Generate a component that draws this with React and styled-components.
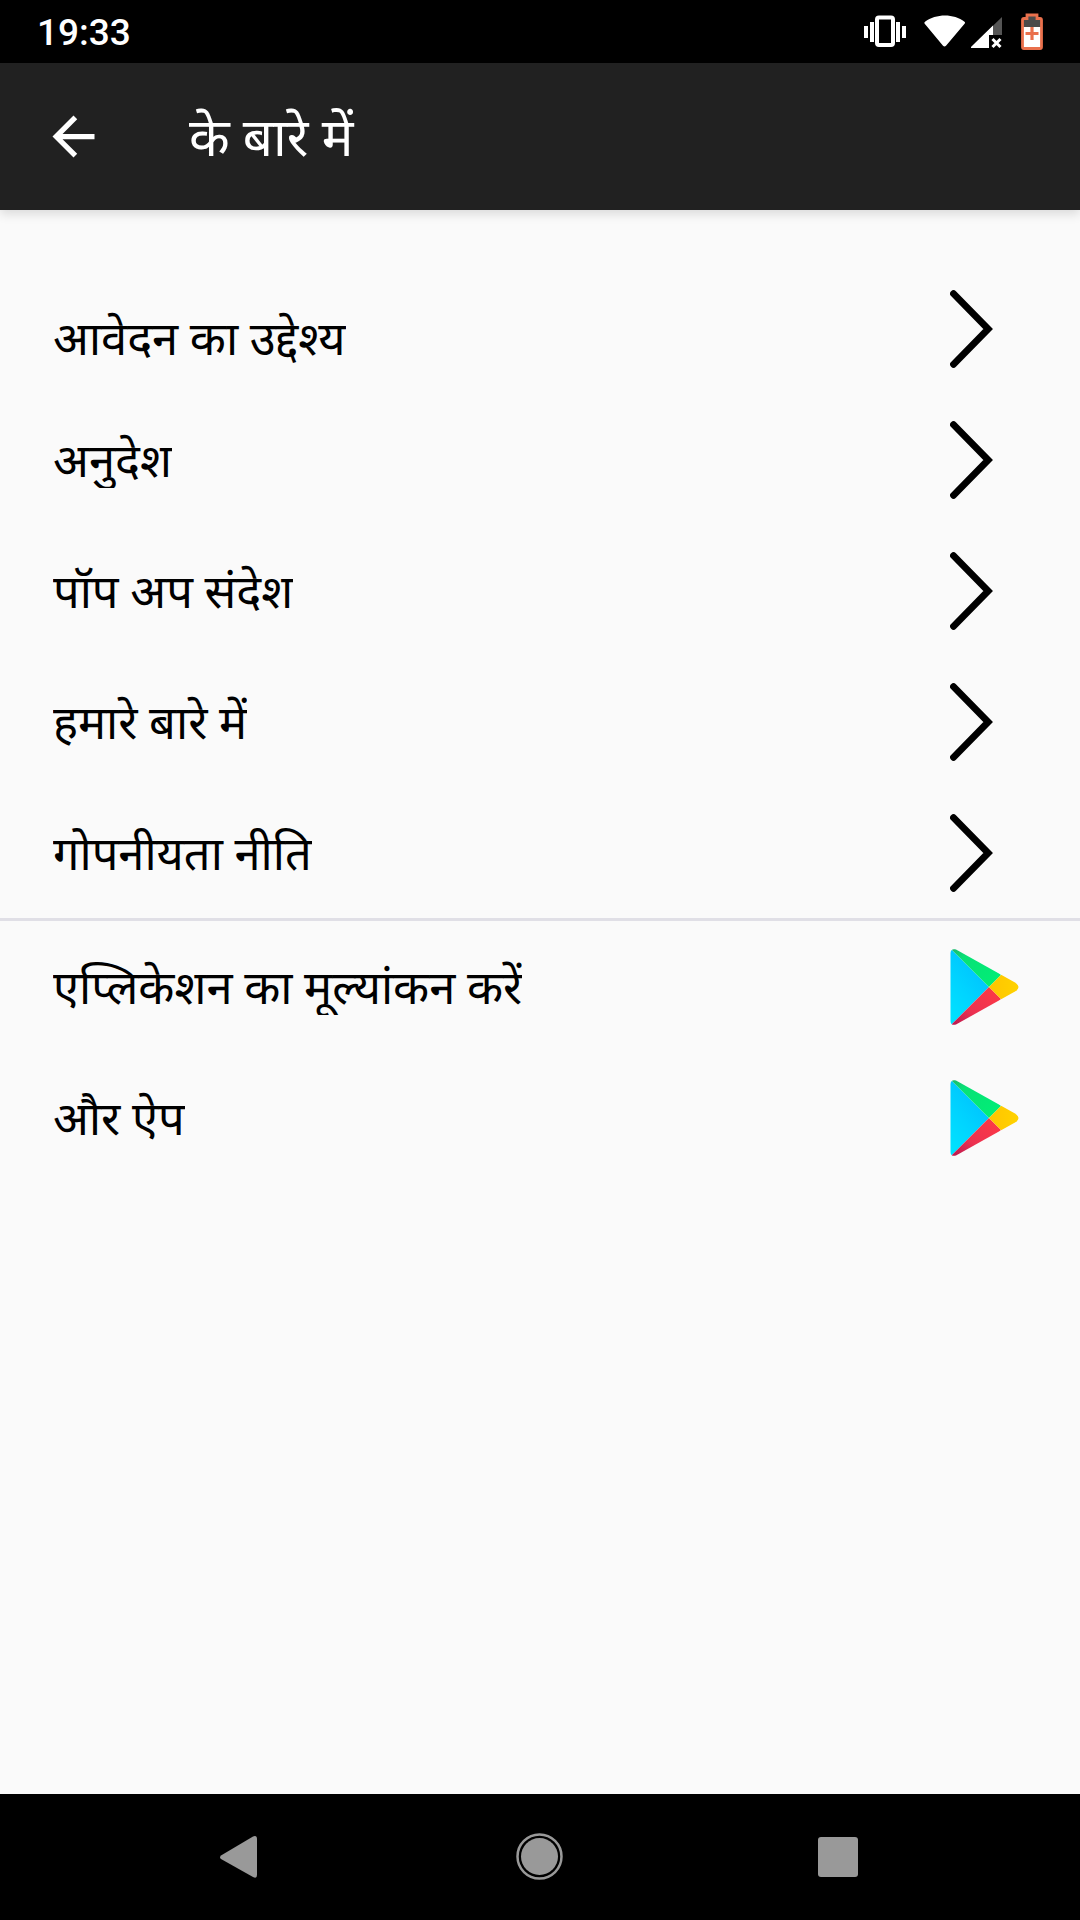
import styled, { createGlobalStyle } from 'styled-components';

const GlobalStyle = createGlobalStyle`
  * {
    box-sizing: border-box;
  }

  body {
    margin: 0;
    background-color: #fafafa;
    font-family: Roboto, 'Noto Sans', 'Noto Sans Devanagari', sans-serif;
  }
`;

const Page = styled.div`
  min-height: 100vh;
  display: flex;
  flex-direction: column;
`;

const StatusBar = styled.div`
  height: 63px;
  padding: 0 36px 0 37px;
  display: flex;
  align-items: center;
  justify-content: space-between;
  background-color: black;
  color: white;
`;

const Clock = styled.span`
  padding-top: 2px;
  font-size: 37px;
  font-weight: 500;
  line-height: 44px;
`;

const StatusIcons = styled.div`
  display: flex;
  align-items: center;
`;

const StatusIcon = styled.svg`
  display: block;
  height: 40px;
  margin-left: ${(props) => props.$gap || 0}px;
`;

const Header = styled.header`
  position: relative;
  height: 147px;
  padding: 0 42px;
  display: flex;
  align-items: center;
  background-color: #212121;
  color: white;
  box-shadow: 0 4px 10px rgba(0, 0, 0, 0.13);
`;

const BackButton = styled.button`
  padding: 0;
  border: none;
  background: none;
  color: inherit;
  cursor: pointer;

  svg {
    display: block;
  }
`;

const Title = styled.h1`
  margin: 0 0 0 84px;
  padding-top: 2px;
  font-size: 53px;
  font-weight: 400;
  line-height: 64px;
`;

const Main = styled.main`
  flex: 1;
  padding-top: 53px;
`;

const List = styled.ul`
  margin: 0;
  padding: 0;
  list-style: none;

  & + & {
    border-top: 3px solid #e0dfe6;
  }
`;

const Row = styled.a`
  height: 131px;
  padding: 0 50px 0 53px;
  display: flex;
  align-items: center;
  justify-content: space-between;
  color: black;
  text-decoration: none;

  svg {
    display: block;
  }
`;

const Label = styled.span`
  height: 56px;
  margin-top: ${(props) => (props.$first ? '18px' : '0')};
  font-size: 47px;
  line-height: 58px;
  overflow: hidden;
`;

const NavBar = styled.nav`
  height: 126px;
  padding: 0 90px;
  display: flex;
  background-color: black;
`;

const NavButton = styled.button`
  flex: 1;
  padding: 0;
  border: none;
  background: none;
  display: flex;
  align-items: center;
  justify-content: center;
  cursor: pointer;
`;

const infoItems = [
  'आवेदन का उद्देश्य',
  'अनुदेश',
  'पॉप अप संदेश',
  'हमारे बारे में',
  'गोपनीयता नीति',
];

const storeItems = ['एप्लिकेशन का मूल्यांकन करें', 'और ऐप'];

const Chevron = () => (
  <svg width="80" height="80" viewBox="0 0 80 80" fill="none">
    <path
      d="M3.500 4.700 L38.200 40 L3.500 75.300"
      stroke="black"
      strokeWidth="6.800"
      strokeLinecap="round"
    />
  </svg>
);

const PlayLogo = ({ id }) => (
  <svg width="80" height="80" viewBox="0 0 80 80">
    <defs>
      <clipPath id={`${id}-shape`}>
        <path d="M0.500 6 C0.500 2.500 3 1.500 6 2.500 L65 35.500 Q72 40 65 44.500 L6 77.500 C3 78.500 0.500 77.500 0.500 74 Z" />
      </clipPath>
      <linearGradient id={`${id}-blue`} x1="0.8" y1="0" x2="0.2" y2="1">
        <stop offset="0" stopColor="#00bcfd" />
        <stop offset="0.6" stopColor="#00d4ff" />
        <stop offset="1" stopColor="#00e2ff" />
      </linearGradient>
      <linearGradient id={`${id}-red`} x1="1" y1="0" x2="0" y2="1">
        <stop offset="0" stopColor="#ff3a44" />
        <stop offset="0.6" stopColor="#ec3150" />
        <stop offset="1" stopColor="#b5164f" />
      </linearGradient>
      <linearGradient id={`${id}-green`} x1="0" y1="0" x2="1" y2="1">
        <stop offset="0" stopColor="#1fb26b" />
        <stop offset="0.25" stopColor="#08e176" />
        <stop offset="1" stopColor="#00f076" />
      </linearGradient>
      <linearGradient id={`${id}-yellow`} x1="1" y1="0" x2="0" y2="0">
        <stop offset="0" stopColor="#ffd800" />
        <stop offset="1" stopColor="#ffc400" />
      </linearGradient>
    </defs>
    <g clipPath={`url(#${id}-shape)`}>
      <path d="M0 1 L39 40 L0 79 Z" fill={`url(#${id}-blue)`} />
      <path d="M0 1 H27 L51 28 L39 40 Z" fill={`url(#${id}-green)`} />
      <path d="M0 79 H27 L51 52 L39 40 Z" fill={`url(#${id}-red)`} />
      <path d="M39 40 L55 24 H80 V56 H55 Z" fill={`url(#${id}-yellow)`} />
    </g>
  </svg>
);

const VibrateIcon = () => (
  <StatusIcon width="42" viewBox="0 0 42 40" fill="white">
    <path d="M0 14h4v12H0zM6 10h4v20H6zM32 10h4v20h-4zM38 14h4v12h-4z" />
    <rect
      x="13"
      y="5.500"
      width="16"
      height="27.500"
      rx="2"
      fill="none"
      stroke="white"
      strokeWidth="4"
    />
  </StatusIcon>
);

const WifiIcon = () => (
  <StatusIcon $gap={18} width="42" viewBox="0 0 42 40" fill="white">
    <path d="M0.500 11.500 Q0 10.500 1 9.700 C12 1.300 30 1.300 40.500 9.700 Q41.500 10.500 40.800 11.500 L22 33.700 Q20.500 35.300 19 33.700 Z" />
  </StatusIcon>
);

const SignalIcon = () => (
  <StatusIcon $gap={5} width="32" viewBox="0 0 32 40">
    <path d="M31 5 V35 H0 Z" fill="#555" />
    <path d="M22 13.500 V24 H18 V36 H0 V35 Z" fill="white" />
    <path d="M18 23 H32 V37 H18 Z" fill="black" />
    <path
      d="M21.500 27 L29.500 35 M29.500 27 L21.500 35"
      stroke="white"
      strokeWidth="3"
    />
  </StatusIcon>
);

const BatteryIcon = () => (
  <StatusIcon $gap={17} width="24" viewBox="0 0 24 40">
    <path d="M7 3 H17 V6 H21 V36 H3 V6 H7 Z" fill="white" />
    <path d="M7 3 H17 V6 H21 V15 H3 V6 H7 Z" fill="#4a4a4a" />
    <path
      d="M7 6.500 V3 H17 V6.500 H20 Q21.500 6.500 21.500 8 V35 Q21.500 36.500 20 36.500 H4 Q2.500 36.500 2.500 35 V8 Q2.500 6.500 4 6.500 Z"
      fill="none"
      stroke="#e9704c"
      strokeWidth="2.800"
    />
    <path d="M12 15 V28 M5.500 21.500 H18.500" stroke="#e9704c" strokeWidth="3.200" />
  </StatusIcon>
);

const App = () => {
  return (
    <Page>
      <GlobalStyle />
      <StatusBar>
        <Clock>19:33</Clock>
        <StatusIcons>
          <VibrateIcon />
          <WifiIcon />
          <SignalIcon />
          <BatteryIcon />
        </StatusIcons>
      </StatusBar>
      <Header>
        <BackButton type="button" aria-label="वापस">
          <svg width="63" height="63" viewBox="0 0 24 24" fill="white">
            <path d="M20 11H7.830l5.590-5.590L12 4l-8 8 8 8 1.410-1.410L7.830 13H20v-2z" />
          </svg>
        </BackButton>
        <Title>के बारे में</Title>
      </Header>
      <Main>
        <List>
          {infoItems.map((item, index) => (
            <li key={item}>
              <Row href="#">
                <Label $first={index === 0}>{item}</Label>
                <Chevron />
              </Row>
            </li>
          ))}
        </List>
        <List>
          {storeItems.map((item, index) => (
            <li key={item}>
              <Row href="#">
                <Label>{item}</Label>
                <PlayLogo id={`play${index}`} />
              </Row>
            </li>
          ))}
        </List>
      </Main>
      <NavBar>
        <NavButton type="button" aria-label="Back">
          <svg width="44" height="44" viewBox="0 0 44 44" fill="#999">
            <path d="M3 20.500 L35 1.500 Q39 0 39 4 V40 Q39 44 35 42 L3 24 Q1 22.500 3 20.500 Z" />
          </svg>
        </NavButton>
        <NavButton type="button" aria-label="Home">
          <svg width="48" height="48" viewBox="0 0 48 48" fill="#999">
            <circle cx="23.500" cy="23.500" r="18.500" />
            <circle
              cx="23.500"
              cy="23.500"
              r="22"
              fill="none"
              stroke="#999"
              strokeWidth="2.500"
            />
          </svg>
        </NavButton>
        <NavButton type="button" aria-label="Recent apps">
          <svg width="44" height="44" viewBox="0 0 44 44" fill="#999">
            <rect x="0" y="2" width="40" height="40" rx="3" />
          </svg>
        </NavButton>
      </NavBar>
    </Page>
  );
};

export default App;
